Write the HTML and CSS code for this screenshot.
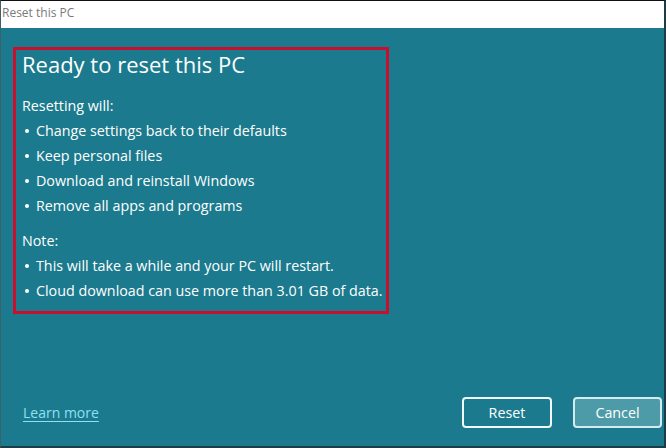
FILE: index.html
```html
<!DOCTYPE html>
<html>
<head>
<meta charset="utf-8">
<link rel="stylesheet" href="styles.css">
</head>
<body>
<div class="window">
  <div class="titlebar">Reset this PC</div>
  <div class="content">
    <div class="panel">
      <h1 class="title">Ready to reset this PC</h1>
      <p class="label">Resetting will:</p>
      <ul class="list">
        <li>Change settings back to their defaults</li>
        <li>Keep personal files</li>
        <li>Download and reinstall Windows</li>
        <li>Remove all apps and programs</li>
      </ul>
      <p class="label note">Note:</p>
      <ul class="list">
        <li>This will take a while and your PC will restart.</li>
        <li>Cloud download can use more than 3.01 GB of data.</li>
      </ul>
    </div>
    <div class="footer">
      <a class="link" href="#">Learn more</a>
      <div class="buttons">
        <button class="btn btn-primary">Reset</button>
        <button class="btn btn-secondary">Cancel</button>
      </div>
    </div>
  </div>
</div>
</body>
</html>
```
FILE: styles.css
```css
* { box-sizing: border-box; }
html, body { margin: 0; padding: 0; }
body {
  width: 666px;
  height: 448px;
  overflow: hidden;
  font-family: "Open Sans", "Noto Sans", sans-serif;
  background: #1b7a8d;
}
.window {
  width: 666px;
  height: 448px;
  display: flex;
  flex-direction: column;
  border-top: 1px solid #111;
  border-left: 1px solid #3d5f66;
  border-right: 2px solid #1d3c44;
  border-bottom: 2px solid #1d3c44;
  background: #1b7a8d;
}
.titlebar {
  height: 27px;
  background: #fff;
  color: #7a7a7a;
  font-size: 12px;
  line-height: 24px;
  padding-left: 1px;
  flex: none;
}
.content {
  flex: 1;
  display: flex;
  flex-direction: column;
  justify-content: space-between;
  padding: 19px 2px 18px 12px;
}
.panel {
  width: 376px;
  border: 3px solid #c8102e;
  padding: 0 0 8px 6px;
  color: #fff;
}
.title {
  margin: 0;
  font-size: 22px;
  font-weight: 400;
  line-height: 28px;
}
.label {
  margin: 15px 0 0;
  font-size: 14.3px;
  line-height: 25px;
}
.label.note { margin-top: 10px; }
.list {
  list-style: none;
  margin: 0;
  padding: 0;
  font-size: 14.3px;
  line-height: 25px;
  white-space: nowrap;
}
.list li {
  position: relative;
  padding-left: 14px;
}
.list li::before {
  content: "";
  position: absolute;
  left: 3px;
  top: 11px;
  width: 4px;
  height: 4px;
  border-radius: 50%;
  background: #fff;
}
.footer {
  display: flex;
  justify-content: space-between;
  align-items: center;
  padding-left: 10px;
}
.link {
  color: #8fe0f3;
  font-size: 14px;
  text-decoration: underline;
  text-underline-offset: 3px;
  text-decoration-thickness: 1px;
}
.buttons {
  display: flex;
  gap: 21px;
}
.btn {
  font-family: inherit;
  font-size: 14.3px;
  color: #fff;
  width: 90px;
  height: 31px;
  border-radius: 4px;
  padding: 0;
  line-height: 27px;
}
.btn-primary {
  background: #1b7a8d;
  border: 2px solid #f2f8f9;
}
.btn-secondary {
  background: #4d9ba8;
  border: 2px solid #d5ecef;
  width: 89px;
}
```
